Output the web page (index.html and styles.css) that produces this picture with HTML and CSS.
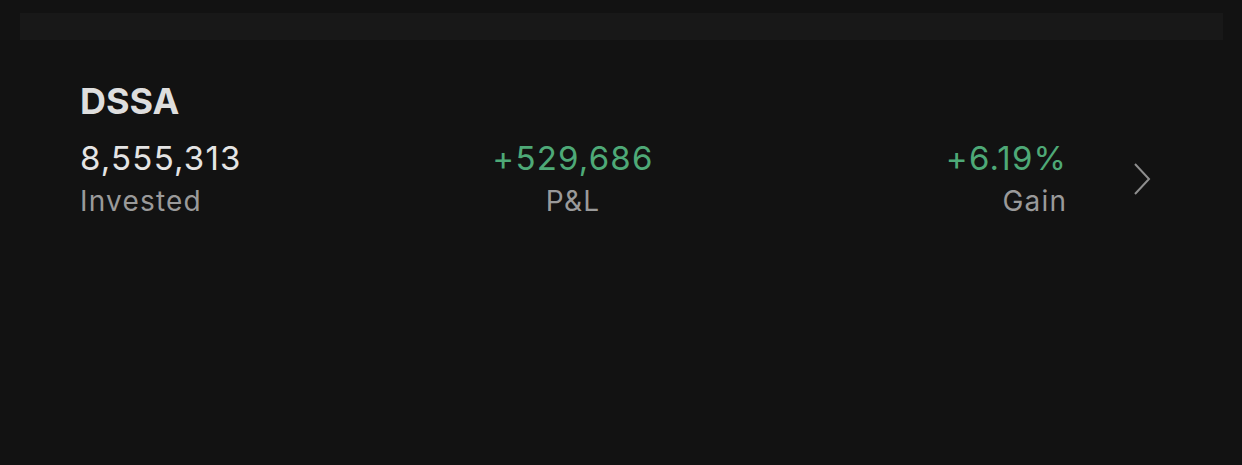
FILE: index.html
```html
<!doctype html>
<html lang="en">
<head>
    <meta charset="UTF-8">
    <title>Holdings</title>
    <link rel="stylesheet" href="styles.css">
</head>
<body>
<div class="top-bar"></div>

<div class="holding">
    <h4 class="holding-name">DSSA</h4>
    <div class="holding-row">
        <div class="stats">
            <div class="stat stat-left">
                <div class="stat-value">8,555,313</div>
                <div class="stat-label">Invested</div>
            </div>
            <div class="stat stat-center">
                <div class="stat-value up">+529,686</div>
                <div class="stat-label">P&amp;L</div>
            </div>
            <div class="stat stat-right">
                <div class="stat-value up">+6.19%</div>
                <div class="stat-label">Gain</div>
            </div>
        </div>
        <svg class="chevron" width="20" height="34" viewBox="0 0 20 34">
            <path d="M3 2 L17 17 L3 32" fill="none" stroke="#8e8e8e" stroke-width="2"/>
        </svg>
    </div>
</div>
</body>
</html>
```

FILE: styles.css
```css
body {
    margin: 0;
    background-color: #121212;
    font-family: Inter, "Noto Sans", sans-serif;
    color: #e4e4e4;
}

.top-bar {
    height: 27px;
    margin: 13px 19px 0 20px;
    background-color: #181818;
}

.holding {
    padding: 39px 0 0 80px;
}

.holding-name {
    margin: 0;
    font-size: 36px;
    font-weight: 700;
    line-height: 44px;
    color: #dedede;
}

.holding-row {
    display: flex;
    align-items: center;
    margin-top: 15px;
}

.stats {
    width: 986px;
    display: grid;
    grid-template-columns: 1fr auto 1fr;
}

.stat-center {
    text-align: center;
}

.stat-right {
    text-align: right;
}

.stat-value {
    font-size: 33px;
    line-height: 40px;
    letter-spacing: 1.2px;
    color: #e4e4e4;
    margin-bottom: 6px;
}

.stat-label {
    font-size: 28px;
    line-height: 34px;
    letter-spacing: 1.2px;
    color: #9a9a9a;
}

.stat-right .stat-value,
.stat-right .stat-label {
    margin-right: -1.2px;
}

.up {
    color: #4ea977;
}

.chevron {
    margin-left: 66px;
    margin-top: 2px;
}
```
